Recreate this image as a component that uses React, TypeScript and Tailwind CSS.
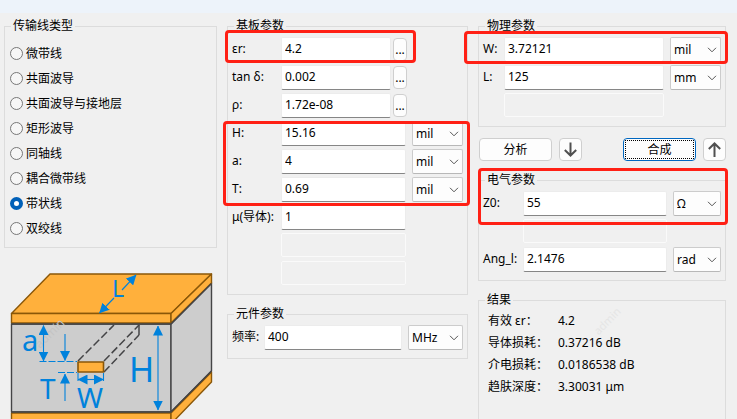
import { useId, useState } from "react";
import type { ReactNode } from "react";

const lineTypes = ["微带线", "共面波导", "共面波导与接地层", "矩形波导", "同轴线", "耦合微带线", "带状线", "双绞线"];

const results = [
  ["有效 εr：", "4.2"],
  ["导体损耗：", "0.37216 dB"],
  ["介电损耗：", "0.0186538 dB"],
  ["趋肤深度：", "3.30031 μm"],
];

function Group({ title, className = "", children }: { title: string; className?: string; children: ReactNode }) {
  return (
    <fieldset className={`relative min-w-0 border border-[#dcdcdc] ${className}`}>
      <legend className="ml-1.5 px-0.5 leading-5">{title}</legend>
      {children}
    </fieldset>
  );
}

function Unit({ value, label, className }: { value: string; label: string; className: string }) {
  return (
    <div className={`relative ml-1.5 shrink-0 ${className}`}>
      <select
        aria-label={label}
        defaultValue={value}
        className="h-[25px] w-full appearance-none rounded-xs border border-[#cccccc] border-b-[#b8b8b8] bg-[#fdfdfd] pl-[3px] outline-none"
      >
        <option>{value}</option>
      </select>
      <svg viewBox="0 0 10 6" className="pointer-events-none absolute top-2.5 right-1 h-1.5 w-2.5" fill="none" stroke="#555">
        <path d="M1 0.8 L5 4.8 L9 0.8" />
      </svg>
    </div>
  );
}

type FieldProps = {
  label?: string;
  value?: string;
  unit?: string;
  browse?: boolean;
  trailing?: string;
  labelWidth: string;
  unitWidth?: string;
};

function Field({ label, value, unit, browse, trailing = "", labelWidth, unitWidth = "w-[51px]" }: FieldProps) {
  const id = useId();
  return (
    <div className="flex h-[25px] items-start">
      <label htmlFor={id} className={`shrink-0 leading-6 whitespace-nowrap ${labelWidth}`}>
        {label}
      </label>
      {label ? (
        <input
          id={id}
          defaultValue={value}
          className="h-[25px] min-w-0 flex-1 rounded-xs border border-[#ececec] border-b-[#868686] bg-white pb-0.5 pl-[3px] outline-none"
        />
      ) : (
        <input id={id} disabled aria-label="unused" className="h-6 min-w-0 flex-1 rounded-xs border border-[#fafafa] bg-[#f0f0f0]" />
      )}
      {browse && (
        <button
          type="button"
          aria-label={`${label} browse`}
          className="mt-px ml-0.5 h-[23px] w-3.5 shrink-0 rounded border border-[#cfcfcf] bg-[#fdfdfd] text-center leading-5"
        >
          ...
        </button>
      )}
      {unit && <Unit value={unit} label={`${label} unit`} className={unitWidth} />}
      {trailing && <span className={`shrink-0 ${trailing}`} />}
    </div>
  );
}

function Highlight({ className }: { className: string }) {
  return <div className={`pointer-events-none absolute z-10 rounded-sm border-3 border-[#ff2015] ${className}`} />;
}

function ArrowButton({ up = false }: { up?: boolean }) {
  return (
    <button
      type="button"
      aria-label={up ? "up" : "down"}
      className="flex size-[23px] items-center justify-center rounded border border-[#cfcfcf] bg-[#fdfdfd]"
    >
      <svg viewBox="0 0 15 15" className="size-[15px]" fill="none" stroke="#505050" strokeWidth="2">
        {up ? <path d="M7.5 15V1.500M1.800 7L7.500 1.500L13.200 7" /> : <path d="M7.500 0.500V13.500M1.800 8L7.500 13.500L13.200 8" />}
      </svg>
    </button>
  );
}

function StriplineDiagram() {
  return (
    <svg
      viewBox="10 273 204 155"
      className="mt-[25px] ml-1.5 w-[204px] shrink-0 font-['Noto_Sans',sans-serif]"
      strokeLinejoin="round"
      role="img"
    >
      <defs>
        <marker id="tip" viewBox="0 0 10 10" refX="9.5" refY="5" markerWidth="10" markerHeight="10" markerUnits="userSpaceOnUse" orient="auto-start-reverse">
          <path d="M0 0L10 5L0 10Z" fill="#0082dc" />
        </marker>
      </defs>
      <g stroke="#444446" strokeWidth="1.4" fill="#cdcdcd">
        <path d="M11.5 324H171V412H11.5Z" />
        <path d="M171 324L211.500 283V371L171 412Z" />
      </g>
      <g stroke="#8a5708" strokeWidth="1.4" fill="#ffb03c">
        <path d="M11.500 313.500L50 274H211.500L171 313.500Z" />
        <path d="M11.500 313.500H171V323H11.500Z" />
        <path d="M171 313.500L211.500 274V283L171 323Z" />
        <path d="M11.500 413H171V424H11.500Z" />
        <path d="M171 413L211.500 372V382L171 424Z" />
      </g>
      <path d="M11 324H171L211.500 283.500M11 412H171L211.500 371" fill="none" stroke="#444446" strokeWidth="1.4" />
      <text x="40" y="349" fontSize="12" fill="#c4c4c4" transform="rotate(-45 40 349)">admin</text>
      <g fill="none" stroke="#444446" strokeWidth="1.5">
        <path d="M78 361L114 325M104 361L139 325M104 372L139 335" strokeDasharray="8 3" />
        <path d="M139 325V335" />
      </g>
      <path d="M78 362H103.500V372H78Z" fill="#ffb03c" stroke="#8a5708" strokeWidth="1.6" />
      <g fill="none" stroke="#0082dc" strokeWidth="1.1">
        <path d="M43.500 325.500V361" markerStart="url(#tip)" markerEnd="url(#tip)" />
        <path d="M65 334V360.500" markerEnd="url(#tip)" />
        <path d="M65 401V374" markerEnd="url(#tip)" />
        <path d="M78 379.500H103.500" markerStart="url(#tip)" markerEnd="url(#tip)" />
        <path d="M158 326V410" markerStart="url(#tip)" markerEnd="url(#tip)" />
        <path d="M122 290L136 275" markerEnd="url(#tip)" />
        <path d="M114 298L99.500 313" markerEnd="url(#tip)" />
        <path d="M39.500 361.500H77M58 372.500H77" strokeDasharray="7 2" />
        <path d="M78 373V381M103.500 373V381" />
      </g>
      <g fill="#0082dc">
        <text x="22" y="351" fontSize="29">a</text>
        <text x="40" y="399" fontSize="28">T</text>
        <text x="77" y="408" fontSize="28">W</text>
        <text x="129" y="382" fontSize="34">H</text>
        <text x="112" y="297" fontSize="23">L</text>
      </g>
    </svg>
  );
}

export default function App() {
  const [selected, setSelected] = useState("带状线");
  return (
    <div className="flex h-screen flex-col overflow-hidden bg-[#f0f0f0] font-['Noto_Sans','Noto_Sans_CJK_SC',sans-serif] text-xs text-black">
      <header className="h-[13px] shrink-0 bg-[#edf3fa]" />
      <main className="grid min-h-0 flex-1 grid-cols-[213fr_241fr_248fr] gap-x-2.5 pt-[3px] pr-[11px] pl-1">
        <section className="flex min-w-0 flex-col">
          <Group title="传输线类型" className="shrink-0 pb-1.5">
            <div className="flex flex-col pt-[5px] pl-[5px]">
              {lineTypes.map((name) => (
                <label key={name} className="flex h-[25px] items-center gap-[3px]">
                  <input
                    type="radio"
                    name="line-type"
                    checked={selected === name}
                    onChange={() => setSelected(name)}
                    className="size-[13px] appearance-none rounded-full border border-[#777777] bg-[#f6f6f6] checked:border-4 checked:border-[#0060b8] checked:bg-white"
                  />
                  {name}
                </label>
              ))}
            </div>
          </Group>
          <StriplineDiagram />
        </section>

        <section className="flex min-w-0 flex-col gap-[9px]">
          <div className="relative">
            <Group title="基板参数" className="pb-2">
              <div className="flex flex-col gap-[3px] pt-px pr-1 pl-1">
                <Field label="εr:" value="4.2" browse trailing="w-14" labelWidth="w-[49px]" />
                <Field label="tan δ:" value="0.002" browse trailing="w-14" labelWidth="w-[49px]" />
                <Field label="ρ:" value="1.72e-08" browse trailing="w-14" labelWidth="w-[49px]" />
                <Field label="H:" value="15.16" unit="mil" labelWidth="w-[49px]" />
                <Field label="a:" value="4" unit="mil" labelWidth="w-[49px]" />
                <Field label="T:" value="0.69" unit="mil" labelWidth="w-[49px]" />
                <Field label="μ(导体):" value="1" trailing="w-[57px]" labelWidth="w-[49px]" />
                <Field trailing="w-[57px]" labelWidth="w-[49px]" />
                <Field trailing="w-[57px]" labelWidth="w-[49px]" />
              </div>
            </Group>
            <Highlight className="top-3.5 right-[52px] -left-0.5 h-[33px]" />
            <Highlight className="top-[105px] -right-0.5 -left-1 h-[85px]" />
          </div>
          <Group title="元件参数" className="pb-2">
            <div className="pt-px pr-1 pl-1">
              <Field label="频率:" value="400" unit="MHz" labelWidth="w-8" unitWidth="w-[55px]" />
            </div>
          </Group>
        </section>

        <section className="flex min-h-0 min-w-0 flex-col">
          <div className="relative">
            <Group title="物理参数" className="pb-2">
              <div className="flex flex-col gap-[3px] pt-px pr-1 pl-1">
                <Field label="W:" value="3.72121" unit="mil" labelWidth="w-[21px]" />
                <Field label="L:" value="125" unit="mm" labelWidth="w-[21px]" />
                <Field trailing="w-[57px]" labelWidth="w-[21px]" />
              </div>
            </Group>
            <Highlight className="top-[15px] -right-0.5 -left-3.5 h-[33px]" />
          </div>
          <div className="mt-[11px] flex items-center gap-[7px] pl-px">
            <button type="button" className="h-[23px] w-[73px] rounded border border-[#cfcfcf] bg-[#fdfdfd]">分析</button>
            <ArrowButton />
            <button type="button" className="ml-auto h-[23px] w-[73px] rounded border border-[#0067c0] bg-[#fdfdfd] p-px">
              <span className="flex h-full items-center justify-center border border-dotted border-black">合成</span>
            </button>
            <ArrowButton up />
          </div>
          <div className="relative mt-[9px]">
            <Group title="电气参数" className="pb-2">
              <div className="flex flex-col gap-[3px] pt-px pr-1 pl-1">
                <Field label="Z0:" value="55" unit="Ω" labelWidth="w-10" unitWidth="w-12" />
                <Field trailing="w-[54px]" labelWidth="w-10" />
                <Field label="Ang_l:" value="2.1476" unit="rad" labelWidth="w-10" unitWidth="w-12" />
              </div>
            </Group>
            <Highlight className="-top-[2px] -right-0.5 left-0 h-[57px]" />
          </div>
          <Group title="结果" className="mt-[9px] flex-1 border-b-0">
            <span className="absolute top-1 left-[112px] -rotate-45 text-[11px] text-[#e5e5e5]">admin</span>
            <dl className="relative grid grid-cols-[70px_1fr] pl-[9px] leading-[22px]">
              {results.map(([name, value]) => (
                <div key={name} className="contents">
                  <dt>{name}</dt>
                  <dd>{value}</dd>
                </div>
              ))}
            </dl>
          </Group>
        </section>
      </main>
    </div>
  );
}
